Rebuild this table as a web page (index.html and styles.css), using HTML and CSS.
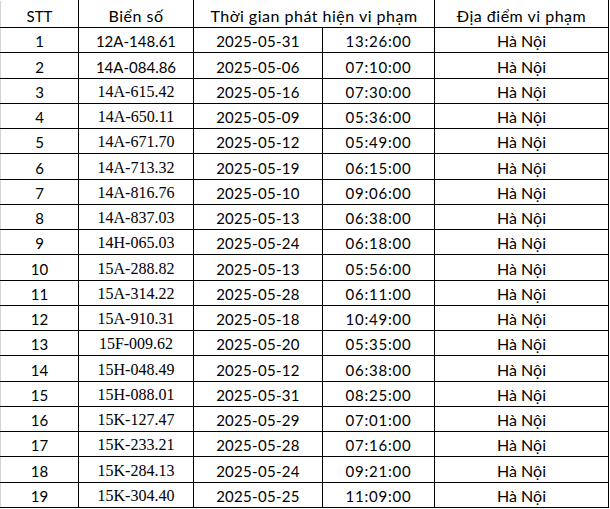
FILE: index.html
```html
<!DOCTYPE html>
<html lang="vi">
<head>
<meta charset="utf-8">
<title>Danh sách vi phạm</title>
<link rel="stylesheet" href="styles.css">
</head>
<body>
<table class="sheet">
  <colgroup>
    <col class="c-stt"><col class="c-plate"><col class="c-date"><col class="c-time"><col class="c-place">
  </colgroup>
  <thead>
    <tr class="head"><th class="h-stt">STT</th><th>Biển số</th><th colspan="2">Thời gian phát hiện vi phạm</th><th>Địa điểm vi phạm</th></tr>
  </thead>
  <tbody>
    <tr><td>1</td><td>12A-148.61</td><td class="date">2025-05-31</td><td class="time">13:26:00</td><td class="place">Hà Nội</td></tr>
    <tr><td>2</td><td>14A-084.86</td><td class="date">2025-05-06</td><td class="time">07:10:00</td><td class="place">Hà Nội</td></tr>
    <tr><td>3</td><td class="serif">14A-615.42</td><td class="date">2025-05-16</td><td class="time">07:30:00</td><td class="place">Hà Nội</td></tr>
    <tr><td>4</td><td class="serif">14A-650.11</td><td class="date">2025-05-09</td><td class="time">05:36:00</td><td class="place">Hà Nội</td></tr>
    <tr><td>5</td><td class="serif">14A-671.70</td><td class="date">2025-05-12</td><td class="time">05:49:00</td><td class="place">Hà Nội</td></tr>
    <tr><td>6</td><td class="serif">14A-713.32</td><td class="date">2025-05-19</td><td class="time">06:15:00</td><td class="place">Hà Nội</td></tr>
    <tr><td>7</td><td class="serif">14A-816.76</td><td class="date">2025-05-10</td><td class="time">09:06:00</td><td class="place">Hà Nội</td></tr>
    <tr><td>8</td><td class="serif">14A-837.03</td><td class="date">2025-05-13</td><td class="time">06:38:00</td><td class="place">Hà Nội</td></tr>
    <tr><td>9</td><td class="serif">14H-065.03</td><td class="date">2025-05-24</td><td class="time">06:18:00</td><td class="place">Hà Nội</td></tr>
    <tr><td>10</td><td class="serif">15A-288.82</td><td class="date">2025-05-13</td><td class="time">05:56:00</td><td class="place">Hà Nội</td></tr>
    <tr><td>11</td><td class="serif">15A-314.22</td><td class="date">2025-05-28</td><td class="time">06:11:00</td><td class="place">Hà Nội</td></tr>
    <tr><td>12</td><td class="serif">15A-910.31</td><td class="date">2025-05-18</td><td class="time">10:49:00</td><td class="place">Hà Nội</td></tr>
    <tr><td>13</td><td class="serif">15F-009.62</td><td class="date">2025-05-20</td><td class="time">05:35:00</td><td class="place">Hà Nội</td></tr>
    <tr><td>14</td><td class="serif">15H-048.49</td><td class="date">2025-05-12</td><td class="time">06:38:00</td><td class="place">Hà Nội</td></tr>
    <tr><td>15</td><td class="serif">15H-088.01</td><td class="date">2025-05-31</td><td class="time">08:25:00</td><td class="place">Hà Nội</td></tr>
    <tr><td>16</td><td class="serif">15K-127.47</td><td class="date">2025-05-29</td><td class="time">07:01:00</td><td class="place">Hà Nội</td></tr>
    <tr><td>17</td><td class="serif">15K-233.21</td><td class="date">2025-05-28</td><td class="time">07:16:00</td><td class="place">Hà Nội</td></tr>
    <tr><td>18</td><td class="serif">15K-284.13</td><td class="date">2025-05-24</td><td class="time">09:21:00</td><td class="place">Hà Nội</td></tr>
    <tr><td>19</td><td class="serif">15K-304.40</td><td class="date">2025-05-25</td><td class="time">11:09:00</td><td class="place">Hà Nội</td></tr>
  </tbody>
</table>
</body>
</html>
```
FILE: styles.css
```css
html, body {
  margin: 0;
  padding: 0;
  background: #ffffff;
}

.sheet {
  border-collapse: collapse;
  table-layout: fixed;
  width: 608px;
  font-family: Lato, "Open Sans", sans-serif;
  font-size: 15px;
  color: #000000;
}

.c-stt { width: 78px; }
.c-plate { width: 115px; }
.c-date { width: 129px; }
.c-time { width: 112px; }
.c-place { width: 174px; }

.sheet th,
.sheet td {
  border: 1px solid #000000;
  padding: 0 2px 2px;
  text-align: center;
  vertical-align: bottom;
  font-weight: normal;
  line-height: 18px;
  white-space: nowrap;
  overflow: hidden;
}

.sheet th:first-child,
.sheet td:first-child {
  border-left-color: #d4d4d4;
}

.sheet .head th {
  height: 24px;
  border-top-color: #ffffff;
  font-size: 16px;
  letter-spacing: 0.5px;
}

.sheet .head .h-stt {
  font-size: 15px;
  letter-spacing: 0;
}

.sheet td {
  height: 22.26px;
}

.sheet .date {
  letter-spacing: 0.3px;
}

.sheet .time {
  letter-spacing: 0.8px;
}

.sheet .place {
  font-size: 16px;
}

.sheet .serif {
  font-family: "Liberation Serif", "Times New Roman", serif;
  font-size: 16px;
}
```
